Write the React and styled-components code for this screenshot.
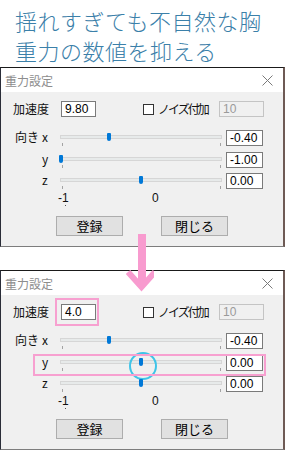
import React from 'react';
import styled, { createGlobalStyle, css } from 'styled-components';

const GlobalStyle = createGlobalStyle`
  html, body {
    margin: 0;
    padding: 0;
    background: #fff;
  }
  * {
    box-sizing: border-box;
  }
`;

const uiFont = `"Noto Sans CJK JP", "Noto Sans", sans-serif`;
const numFont = `"Liberation Sans Narrow", "Liberation Sans", sans-serif`;

const Page = styled.div`
  position: relative;
  width: 285px;
  height: 450px;
  overflow: hidden;
  background: #fff;
  font-family: ${uiFont};
`;

const Heading = styled.div`
  height: 67px;
  padding: 5px 0 0 15px;
  color: #3b80a9;
  font-size: 22px;
  font-weight: 300;
  line-height: 30px;
  letter-spacing: 0.5px;
  white-space: nowrap;
`;

const Window = styled.div`
  width: 285px;
  border-top: 1px solid #1a1a1a;
  border-left: 1px solid #2a2d38;
  border-right: 2px solid #6e5a55;
  border-bottom: 1px solid #7d7d7d;
  margin-bottom: ${(p) => p.$gap || 0}px;
`;

const TitleBar = styled.div`
  display: flex;
  align-items: center;
  justify-content: space-between;
  height: 24px;
  padding: 0 10px 0 4px;
  background: #fff;
  color: #8d8d8d;
  font-size: 12px;
`;

const Body = styled.div`
  background: #f0f0f0;
  padding: 9px 0 10px;
`;

const TopRow = styled.div`
  display: flex;
  align-items: center;
  height: 16px;
  padding-left: 12px;
  margin-bottom: 13px;
  font-size: 12px;
  color: #111;
`;

const FieldLabel = styled.span`
  width: 48px;
  line-height: 16px;
`;

const TextBox = styled.div`
  position: relative;
  flex: none;
  width: ${(p) => p.$w}px;
  height: 16px;
  padding-left: 3px;
  border: 1px solid ${(p) => (p.$disabled ? '#c4c4c4' : '#7a7a7a')};
  background: ${(p) => (p.$disabled ? '#f0f0f0' : '#fff')};
  color: ${(p) => (p.$disabled ? '#9a9a9a' : '#000')};
  font-family: ${numFont};
  font-size: 12px;
  line-height: 14px;

  ${(p) =>
    p.$marked &&
    css`
      &::after {
        content: '';
        position: absolute;
        top: -7px;
        bottom: -7px;
        left: -7px;
        right: -4px;
        border: 2px solid #f7a0d0;
      }
    `}
`;

const CheckBox = styled.span`
  flex: none;
  width: 11px;
  height: 11px;
  margin-left: 47px;
  border: 1px solid #333;
  background: #fff;
`;

const CheckLabel = styled.span`
  flex: none;
  width: 65px;
  padding-left: 4px;
  font-size: 12px;
  letter-spacing: -2px;
  line-height: 16px;
  white-space: nowrap;
`;

const SliderGrid = styled.div`
  display: grid;
  row-gap: 5.5px;
`;

const SliderRow = styled.div`
  position: relative;
  display: flex;
  align-items: flex-start;
  height: 16px;

  ${(p) =>
    p.$marked &&
    css`
      &::after {
        content: '';
        position: absolute;
        top: -1px;
        bottom: -5px;
        left: 32px;
        right: 17px;
        border: 2px solid #f7a0d0;
        pointer-events: none;
      }
    `}
`;

const AxisLabel = styled.div`
  display: flex;
  width: 59px;
  padding-left: 14px;
  font-size: 12px;
  line-height: 14px;
  color: #111;
`;

const AxisPrefix = styled.span`
  width: 27px;
`;

const Slider = styled.div`
  position: relative;
  width: 162px;
  height: 16px;
  margin-right: 4px;

  ${(p) =>
    p.$ringed &&
    css`
      &::after {
        content: '';
        position: absolute;
        left: 69px;
        top: -3px;
        width: 24px;
        height: 24px;
        border: 2px solid #3fc4e8;
        border-radius: 50%;
      }
    `}
`;

const Track = styled.div`
  margin-top: 5px;
  height: 4px;
  border: 1px solid #d6d6d6;
  background: #e7eaea;
`;

const Ticks = styled.div`
  display: flex;
  justify-content: space-between;
  margin-top: 4px;
  padding: 0 1px 0 2px;

  span {
    width: 1px;
    height: 3px;
    background: #a3a3a3;
  }
`;

const Thumb = styled.div`
  position: absolute;
  top: 3px;
  width: 4px;
  height: 8px;
  border-radius: 1px 1px 2px 2px;
  background: #0078d7;
`;

const ScaleRow = styled.div`
  display: flex;
  margin-top: 2px;
  padding-left: 57px;
  height: 14px;
  font-family: ${numFont};
  font-size: 12px;
  line-height: 14px;
  color: #111;
`;

const ScaleMark = styled.span`
  position: relative;
  width: ${(p) => p.$w || 'auto'};

  ${(p) =>
    p.$dot &&
    css`
      &::after {
        content: '';
        position: absolute;
        left: 7px;
        top: 14px;
        width: 1px;
        height: 1px;
        background: #555;
      }
    `}
`;

const ButtonRow = styled.div`
  display: flex;
  gap: 38px;
  margin-top: 11px;
  padding-left: 55px;
`;

const Button = styled.div`
  width: 67px;
  height: 20px;
  border: 1px solid #adadad;
  background: #e1e1e1;
  font-size: 13px;
  line-height: 18px;
  text-align: center;
  color: #000;
`;

const ArrowLayer = styled.svg`
  position: absolute;
  left: 126px;
  top: 234px;
`;

const CloseIcon = () => (
  <svg width="11" height="11" viewBox="0 0 11 11">
    <path d="M0.5 0.5 L10.5 10.5 M10.5 0.5 L0.5 10.5" stroke="#7a7a7a" strokeWidth="1" fill="none" />
  </svg>
);

const thumbLeft = (v) => 81 + 80 * v - 2;

const GravityWindow = ({ accel, axes, marked, gap }) => (
  <Window $gap={gap}>
    <TitleBar>
      <span>重力設定</span>
      <CloseIcon />
    </TitleBar>
    <Body>
      <TopRow>
        <FieldLabel>加速度</FieldLabel>
        <TextBox $w={35} $marked={marked}>{accel}</TextBox>
        <CheckBox />
        <CheckLabel>ノイズ付加</CheckLabel>
        <TextBox $w={45} $disabled>10</TextBox>
      </TopRow>

      <SliderGrid>
        {axes.map((a, i) => (
          <SliderRow key={a.name} $marked={marked && a.name === 'y'}>
            <AxisLabel>
              <AxisPrefix>{i === 0 ? '向き' : ''}</AxisPrefix>
              <span>{a.name}</span>
            </AxisLabel>
            <Slider $ringed={marked && a.name === 'y'}>
              <Track />
              <Ticks>
                <span />
                <span />
              </Ticks>
              <Thumb style={{ left: `${thumbLeft(a.value)}px` }} />
            </Slider>
            <TextBox $w={37}>{a.value.toFixed(2)}</TextBox>
          </SliderRow>
        ))}
      </SliderGrid>

      <ScaleRow>
        <ScaleMark $w="94px" $dot>-1</ScaleMark>
        <ScaleMark>0</ScaleMark>
      </ScaleRow>

      <ButtonRow>
        <Button>登録</Button>
        <Button>閉じる</Button>
      </ButtonRow>
    </Body>
  </Window>
);

export default function App() {
  return (
    <Page>
      <GlobalStyle />
      <Heading>
        揺れすぎても不自然な胸
        <br />
        重力の数値を抑える
      </Heading>

      <GravityWindow
        accel="9.80"
        gap={23}
        axes={[
          { name: 'x', value: -0.4 },
          { name: 'y', value: -1 },
          { name: 'z', value: 0 },
        ]}
      />
      <GravityWindow
        accel="4.0"
        marked
        axes={[
          { name: 'x', value: -0.4 },
          { name: 'y', value: 0 },
          { name: 'z', value: 0 },
        ]}
      />

      <ArrowLayer width="28" height="58" viewBox="0 0 28 58">
        <rect x="12" y="0" width="8" height="50" fill="#f89bcf" />
        <polyline points="2,38 15.5,53 29,38" fill="none" stroke="#f89bcf" strokeWidth="6" strokeLinejoin="miter" />
      </ArrowLayer>
    </Page>
  );
}
